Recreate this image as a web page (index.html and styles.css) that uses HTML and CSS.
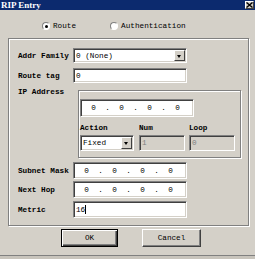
FILE: index.html
```html
<!DOCTYPE html>
<html lang="en">
<head>
    <meta charset="UTF-8">
    <title>RIP Entry</title>
    <link rel="stylesheet" href="styles.css">
</head>
<body>
    <div class="window">
        <div class="titlebar">
            <span class="title">RIP Entry</span>
            <span class="close">
                <svg width="7" height="6" viewBox="0 0 7 6"><path d="M0.5 0.5 L6.5 5.5 M6.5 0.5 L0.5 5.5" stroke="#000" stroke-width="1.4"/></svg>
            </span>
        </div>

        <div class="mode">
            <label class="radio first"><span class="dot checked"></span>Route</label>
            <label class="radio"><span class="dot"></span>Authentication</label>
        </div>

        <div class="group">
            <div class="row r-addr">
                <span class="label">Addr Family</span>
                <div class="field select wide">
                    <span class="value">0 (None)</span>
                    <span class="arrow"></span>
                </div>
            </div>
            <div class="row r-tag">
                <span class="label">Route tag</span>
                <div class="field wide"><span class="value">0</span></div>
            </div>
            <div class="row r-ip">
                <span class="label ip-label">IP Address</span>
                <div class="inner">
                    <div class="field ip ip-main">
                        <span class="oct">0</span><span class="sep">.</span><span class="oct">0</span><span class="sep">.</span><span class="oct">0</span><span class="sep">.</span><span class="oct">0</span>
                    </div>
                    <div class="cols">
                        <div class="col c-action">
                            <span class="col-label">Action</span>
                            <div class="field select"><span class="value">Fixed</span><span class="arrow"></span></div>
                        </div>
                        <div class="col c-num">
                            <span class="col-label">Num</span>
                            <div class="field disabled"><span class="value">1</span></div>
                        </div>
                        <div class="col c-loop">
                            <span class="col-label">Loop</span>
                            <div class="field disabled"><span class="value">0</span></div>
                        </div>
                    </div>
                </div>
            </div>
            <div class="row r-mask">
                <span class="label">Subnet Mask</span>
                <div class="field ip wide">
                    <span class="oct">0</span><span class="sep">.</span><span class="oct">0</span><span class="sep">.</span><span class="oct">0</span><span class="sep">.</span><span class="oct">0</span>
                </div>
            </div>
            <div class="row r-hop">
                <span class="label">Next Hop</span>
                <div class="field ip wide">
                    <span class="oct">0</span><span class="sep">.</span><span class="oct">0</span><span class="sep">.</span><span class="oct">0</span><span class="sep">.</span><span class="oct">0</span>
                </div>
            </div>
            <div class="row r-metric">
                <span class="label">Metric</span>
                <div class="field wide"><span class="value">16</span><span class="caret"></span></div>
            </div>
        </div>

        <div class="buttons">
            <button class="btn btn-ok">OK</button>
            <button class="btn btn-cancel">Cancel</button>
        </div>
    </div>
</body>
</html>
```

FILE: styles.css
```css
body {
    margin: 0;
    padding: 0;
    background-color: #c8c4bc;
    font-family: "Liberation Mono", "DejaVu Sans Mono", monospace;
    font-size: 7.7px;
    color: #000;
}
.window {
    width: 255px;
    height: 255px;
    background-color: #d4d0c8;
    border-bottom: 1px solid #808080;
    box-shadow: 0 1px 0 #404040;
}
.titlebar {
    height: 10px;
    background-color: #0c2a6e;
    display: flex;
    align-items: center;
    justify-content: space-between;
}
.title {
    font-family: "Liberation Serif", serif;
    font-weight: bold;
    font-size: 9px;
    color: white;
    padding-left: 1px;
}
.close {
    width: 9px;
    height: 8px;
    margin-right: 1px;
    background-color: #d4d0c8;
    border-top: 1px solid #fff;
    border-left: 1px solid #fff;
    border-bottom: 1px solid #404040;
    border-right: 1px solid #404040;
    box-sizing: border-box;
    display: flex;
    align-items: center;
    justify-content: center;
}

/* radio row */
.mode {
    height: 24px;
    padding-top: 4px;
    padding-left: 42px;
    display: flex;
    align-items: center;
}
.radio {
    display: flex;
    align-items: center;
}
.radio.first {
    margin-right: 34px;
}
.dot {
    width: 8px;
    height: 8px;
    box-sizing: border-box;
    border-radius: 50%;
    background-color: white;
    border: 1px solid;
    border-color: #808080 #fff #fff #808080;
    margin-right: 3px;
    position: relative;
}
.dot.checked::after {
    content: "";
    position: absolute;
    left: 1.5px;
    top: 1.5px;
    width: 3px;
    height: 3px;
    border-radius: 50%;
    background-color: #000;
}

/* group box */
.group {
    margin-left: 8px;
    width: 241px;
    box-sizing: border-box;
    border: 1px solid #808080;
    box-shadow: inset 1px 1px 0 #fff, 1px 1px 0 #fff;
    padding: 9px 0 7px 9px;
}
.row {
    display: flex;
    align-items: center;
}
.label {
    width: 55px;
    font-weight: bold;
    white-space: nowrap;
}
.r-tag { margin-top: 5px; }
.r-ip {
    margin-top: 4px;
    align-items: flex-start;
}
.ip-label {
    width: 60px;
    line-height: 10px;
}
.r-mask { margin-top: 4px; }
.r-hop { margin-top: 2px; }
.r-metric { margin-top: 3px; }

.r-addr .field, .r-tag .field { height: 15px; }
.r-mask .field, .r-hop .field, .r-metric .field { height: 17px; }

/* text boxes */
.field {
    box-sizing: border-box;
    background-color: white;
    border: 1px solid;
    border-color: #808080 #fff #fff #808080;
    box-shadow: inset 1px 1px 0 #404040, inset -1px -1px 0 #d4d0c8;
    display: flex;
    align-items: center;
    padding-left: 2px;
    position: relative;
}
.field.wide {
    width: 114px;
}
.field.disabled {
    background-color: #d4d0c8;
    color: #808080;
}
.value {
    white-space: pre;
}
.caret {
    width: 1px;
    height: 9px;
    background-color: #000;
}
.field.ip {
    padding-left: 4px;
}
.oct {
    width: 17px;
    text-align: center;
}
.sep {
    width: 11px;
    text-align: center;
}
.select .arrow {
    position: absolute;
    right: 1px;
    top: 1px;
    bottom: 1px;
    width: 11px;
    box-sizing: border-box;
    background-color: #d4d0c8;
    border-top: 1px solid #fff;
    border-left: 1px solid #fff;
    border-bottom: 1px solid #404040;
    border-right: 1px solid #404040;
}
.select .arrow::after {
    content: "";
    position: absolute;
    left: 2px;
    top: 4px;
    border-left: 2.5px solid transparent;
    border-right: 2.5px solid transparent;
    border-top: 3px solid #000;
}

/* inner group: IP address */
.inner {
    margin-top: 3px;
    width: 163px;
    height: 68px;
    box-sizing: border-box;
    border: 1px solid #808080;
    box-shadow: inset 1px 1px 0 #fff, 1px 1px 0 #fff;
    padding: 8px 0 6px 1px;
}
.ip-main {
    width: 114px;
    height: 18px;
    padding-left: 6px;
}
.cols {
    display: flex;
    margin-top: 6px;
}
.col {
    display: flex;
    flex-direction: column;
}
.col-label {
    height: 10px;
    line-height: 10px;
    margin-bottom: 2px;
    font-weight: bold;
}
.col .field {
    height: 16px;
}
.c-action .field { width: 54px; }
.c-num { margin-left: 5px; }
.c-num .field { width: 46px; }
.c-loop { margin-left: 4px; }
.c-loop .field { width: 46px; }

/* buttons */
.buttons {
    display: flex;
    margin-top: 3px;
    padding-left: 61px;
}
.btn {
    height: 18px;
    box-sizing: border-box;
    background-color: #d4d0c8;
    font-family: "Liberation Mono", "DejaVu Sans Mono", monospace;
    font-size: 7.7px;
    color: #000;
    padding: 0;
    border: 1px solid;
    border-color: #fff #404040 #404040 #fff;
    box-shadow: inset -1px -1px 0 #808080;
}
.btn-ok {
    width: 57px;
    border: 1px solid #000;
    box-shadow: inset 1px 1px 0 #fff, inset -1px -1px 0 #404040, inset -2px -2px 0 #808080;
}
.btn-cancel {
    width: 59px;
    margin-left: 24px;
}
```
